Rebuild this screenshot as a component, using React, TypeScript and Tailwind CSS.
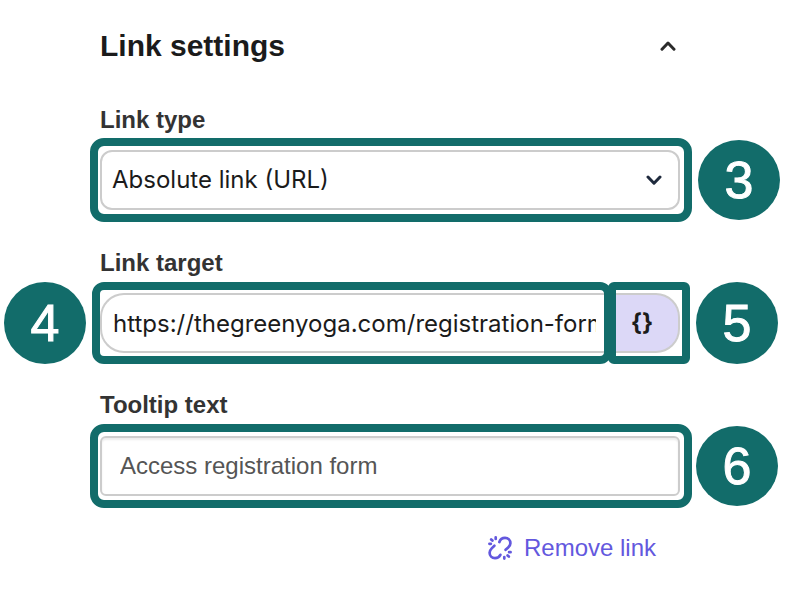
import { useState } from "react";
import type { ReactNode } from "react";

function StepBadge({ step, className }: { step: number; className: string }) {
  return (
    <span
      className={`flex w-[82px] shrink-0 items-center justify-center rounded-[50%] bg-[#126c6a] text-[52px] leading-none text-white [-webkit-text-stroke:1px_white] ${className}`}
    >
      {step}
    </span>
  );
}

function FieldLabel({ htmlFor, children }: { htmlFor: string; children: ReactNode }) {
  return (
    <label
      htmlFor={htmlFor}
      className="ml-[100px] block w-fit text-2xl leading-8 font-bold text-[#333333]"
    >
      {children}
    </label>
  );
}

function Chevron({ up = false, className }: { up?: boolean; className: string }) {
  return (
    <svg
      className={`h-4 w-4 ${className}`}
      viewBox="0 0 16 16"
      fill="none"
      stroke="currentColor"
      strokeWidth={3}
      strokeLinecap="round"
      strokeLinejoin="round"
      aria-hidden
    >
      <path d={up ? "M2 11.2L8 5l6 6.2" : "M2 5l6 6.2L14 5"} />
    </svg>
  );
}

export default function App() {
  const [open, setOpen] = useState(true);
  const [linkType, setLinkType] = useState("url");
  const [target, setTarget] = useState(
    "https://thegreenyoga.com/registration-form",
  );
  const [tooltip, setTooltip] = useState("Access registration form");

  return (
    <main className="min-h-screen bg-white pt-6 pb-8 font-['Liberation_Sans',Arial,sans-serif]">
      <header className="flex items-center justify-between pr-[114px] pl-[100px]">
        <h1 className="text-[30px] leading-11 font-bold text-[#1b1b1b]">
          Link settings
        </h1>
        <button
          type="button"
          aria-label="Link settings"
          aria-expanded={open}
          onClick={() => setOpen(!open)}
          className="text-[#2b2b2b]"
        >
          <Chevron up={open} className="block" />
        </button>
      </header>

      {open && (
        <form className="mt-9" onSubmit={(e) => e.preventDefault()}>
          {/* Link type */}
          <FieldLabel htmlFor="link-type">Link type</FieldLabel>
          <div className="mt-0.5 flex items-center pl-[90px]">
            <div className="h-21 min-w-0 flex-1 rounded-[14px] border-8 border-[#126c6a] py-1 pr-1 pl-0.5">
              <div className="relative h-full">
                <select
                  id="link-type"
                  value={linkType}
                  onChange={(e) => setLinkType(e.target.value)}
                  className="h-full w-full appearance-none rounded-xl border-2 border-[#cccccc] bg-white pr-10 pl-2.5 font-[Inter,sans-serif] text-2xl text-[#1b1b1b]"
                >
                  <option value="url">Absolute link (URL)</option>
                </select>
                <Chevron className="pointer-events-none absolute inset-y-0 right-[18px] my-auto text-[#1f2a3d]" />
              </div>
            </div>
            <div className="w-[98px] shrink-0 pl-1.5">
              <StepBadge step={3} className="h-20" />
            </div>
          </div>

          {/* Link target */}
          <div className="mt-[25px]">
            <FieldLabel htmlFor="link-target">Link target</FieldLabel>
          </div>
          <div className="mt-[3px] flex items-center pl-1">
            <StepBadge step={4} className="mr-1.5 h-[82px]" />
            <div className="h-[82px] min-w-0 flex-1 rounded-xl border-8 border-[#126c6a] py-[3px]">
              <input
                id="link-target"
                type="text"
                value={target}
                onChange={(e) => setTarget(e.target.value)}
                className="h-full w-full rounded-l-3xl border-2 border-r-0 border-[#cccccc] bg-white pr-2 pl-[11px] font-[Inter,sans-serif] text-2xl text-[#1b1b1b]"
              />
            </div>
            <div className="-ml-1 h-[82px] w-[82px] shrink-0 rounded-md border-8 border-[#126c6a] bg-[#126c6a]">
              <div className="h-full bg-white py-[3px] pr-0.5">
                <button
                  type="button"
                  aria-label="Insert variable"
                  className="h-full w-full rounded-r-3xl border-2 border-l-0 border-[#cccccc] bg-[#dcd8f7] pr-2.5 font-[Inter,sans-serif] text-2xl leading-none font-bold text-[#1b1b1b]"
                >
                  {"{}"}
                </button>
              </div>
            </div>
            <div className="w-[100px] shrink-0 pl-1.5">
              <StepBadge step={5} className="h-[82px]" />
            </div>
          </div>

          {/* Tooltip text */}
          <div className="mt-[25px]">
            <FieldLabel htmlFor="tooltip-text">Tooltip text</FieldLabel>
          </div>
          <div className="mt-[3px] flex items-center pl-[90px]">
            <div className="h-21 min-w-0 flex-1 rounded-[14px] border-8 border-[#126c6a] py-1 pr-1 pl-0.5">
              <input
                id="tooltip-text"
                type="text"
                value={tooltip}
                onChange={(e) => setTooltip(e.target.value)}
                className="h-full w-full rounded-md border-2 border-[#cccccc] bg-white px-[18px] text-2xl text-[#555555] shadow-[inset_0_2px_2px_rgba(0,0,0,0.08)]"
              />
            </div>
            <div className="w-[98px] shrink-0 pl-1">
              <StepBadge step={6} className="h-20" />
            </div>
          </div>

          <div className="mt-6 flex justify-end pr-[134px]">
            <button
              type="button"
              className="flex items-center gap-3 text-2xl leading-8 text-[#6358de]"
            >
              <svg
                className="h-6 w-6"
                viewBox="0 0 24 24"
                fill="none"
                stroke="currentColor"
                strokeWidth={2.7}
                strokeLinecap="round"
                strokeLinejoin="round"
                aria-hidden
              >
                <path d="M11.4 6C12.2 3.500 14.500 1.900 17 1.900C20.200 1.900 22.400 4.300 22.400 7.200C22.400 9.200 21.300 10.400 20.200 11.400L17.600 13.800" />
                <path d="M6.400 9.800L3.700 12.400C2.500 13.600 1.600 14.900 1.600 16.800C1.600 19.700 3.900 22.100 7 22.100C9.500 22.100 11.400 20.800 12.400 18.800" />
                <path d="M7.700 1.400v1.500M3.200 3.400l1.200 1.100M1.400 7.800h1.500M16.300 22.600v-1.500M20.800 20.600l-1.200-1.100M22.600 16.200h-1.500" />
              </svg>
              Remove link
            </button>
          </div>
        </form>
      )}
    </main>
  );
}
